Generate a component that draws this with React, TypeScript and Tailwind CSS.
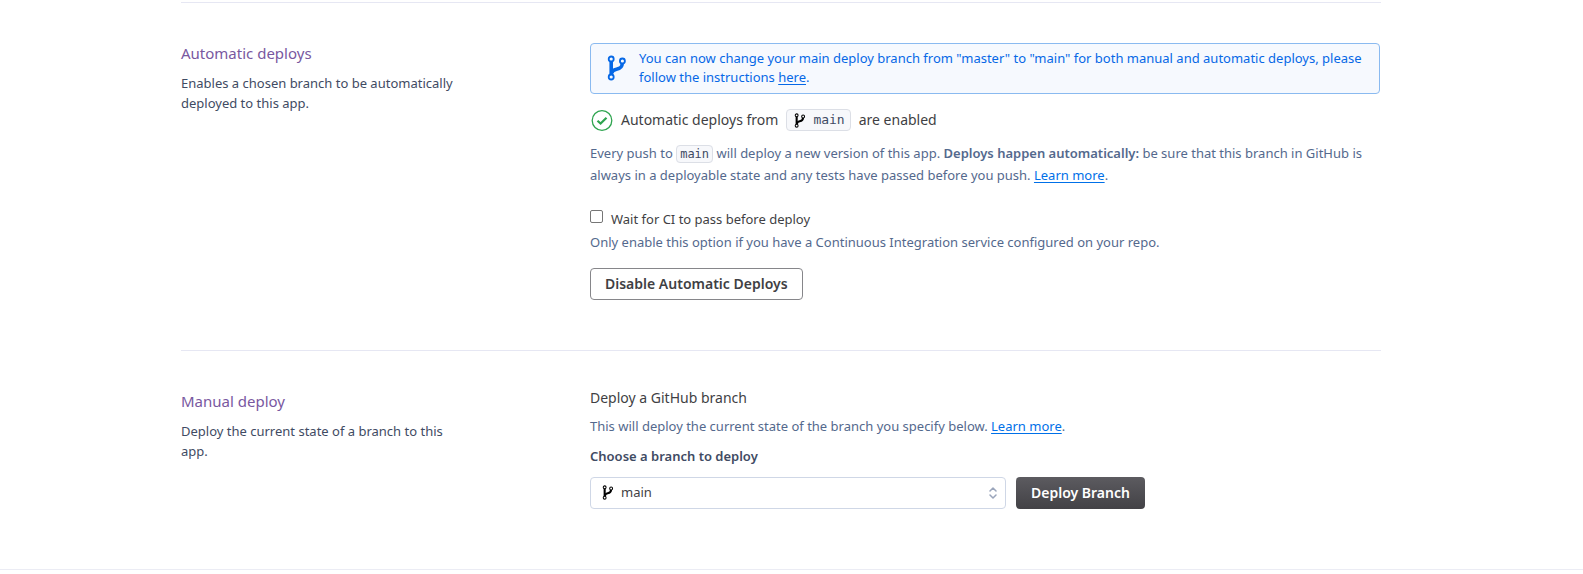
import type { ReactNode } from "react";

function ForkIcon({ className }: { className: string }) {
  return (
    <svg viewBox="0 0 20 26" fill="none" stroke="currentColor" className={className} aria-hidden="true">
      <circle cx="4.2" cy="4" r="2.5" strokeWidth="1.8" />
      <circle cx="15.4" cy="6" r="2.5" strokeWidth="1.8" />
      <circle cx="4.2" cy="22" r="2.5" strokeWidth="1.8" />
      <path d="M4.2 6.5V19.5" strokeWidth="3.6" />
      <path d="M15.2 8.5C15.2 12.8 12.6 13.6 9.5 14.2C6.6 14.8 5 16 4.6 18.6" strokeWidth="3.6" />
    </svg>
  );
}

function CheckIcon() {
  return (
    <svg viewBox="0 0 22 22" fill="none" stroke="#2ea44f" className="size-[22px] shrink-0" aria-hidden="true">
      <circle cx="11" cy="11.5" r="9.8" strokeWidth="1.3" />
      <path d="M6.5 11.8L9.6 14.6L15.5 8.8" strokeWidth="2.2" />
    </svg>
  );
}

function SortIcon() {
  return (
    <svg viewBox="0 0 8 12" fill="none" stroke="#9aa5bb" strokeWidth="1.5" strokeLinecap="round" strokeLinejoin="round" className="pointer-events-none absolute right-[9px] top-[10px] h-3 w-2" aria-hidden="true">
      <path d="M1 4L4 1L7 4" />
      <path d="M1 8L4 11L7 8" />
    </svg>
  );
}

function TextLink({ children }: { children: ReactNode }) {
  return (
    <a href="#" className="text-[#0070e8] underline underline-offset-2">
      {children}
    </a>
  );
}

function Section({ title, description, children }: { title: string; description: string; children: ReactNode }) {
  return (
    <section className="flex gap-[133px] border-t border-[#e6e7f3] pt-10">
      <div className="w-[276px] shrink-0">
        <h2 className="text-[15px] leading-5 text-[#79589f]">{title}</h2>
        <p className="mt-[10px] text-[13px] leading-5 text-[#3f4b63]">{description}</p>
      </div>
      <div className="min-w-0 flex-1 pr-px">{children}</div>
    </section>
  );
}

export default function App() {
  return (
    <div className="border-b border-[#ebecf4] bg-white pb-[60px] pr-[21px] pt-[2px] font-['Noto_Sans','Open_Sans',sans-serif]">
      <main className="mx-auto flex max-w-[1200px] flex-col gap-[50px]">
        <Section title="Automatic deploys" description="Enables a chosen branch to be automatically deployed to this app.">
          <div className="flex items-center gap-3 rounded border border-[#8abaf0] bg-[#f6f9fe] pb-[6px] pl-4 pr-3 pt-[5px] text-[#0668e6]">
            <ForkIcon className="h-[26px] w-5 shrink-0" />
            <p className="text-[13px] leading-[19px]">
              You can now change your main deploy branch from "master" to "main" for both manual and automatic deploys, please follow the instructions{" "}
              <a href="#" className="underline underline-offset-2">here</a>.
            </p>
          </div>
          <div className="mt-[15px] flex h-[22px] items-center gap-2 pl-px text-sm text-[#3f3f44]">
            <CheckIcon />
            <span>Automatic deploys from</span>
            <span className="flex h-[22px] items-center gap-[7px] rounded border border-[#dcdfe6] bg-[#f7f8fb] pl-[7px] pr-[5px] font-['DejaVu_Sans_Mono',monospace] text-[13px] text-[#3f4b63]">
              <ForkIcon className="h-[15px] w-3 text-black" />
              main
            </span>
            <span>are enabled</span>
          </div>
          <p className="mt-[11px] text-[13px] leading-[22px] text-[#54698d]">
            Every push to{" "}
            <code className="rounded border border-[#dcdfe6] bg-[#f7f8fb] px-[3px] py-px font-['DejaVu_Sans_Mono',monospace] text-[12px] leading-none text-[#3f4b63]">main</code>{" "}
            will deploy a new version of this app. <strong className="font-semibold">Deploys happen automatically:</strong> be sure that this branch in GitHub is always in a deployable state and any tests have passed before you push. <TextLink>Learn more</TextLink>.
          </p>
          <div className="mt-6 flex gap-2">
            <input id="wait-ci" type="checkbox" className="size-[13px] appearance-none rounded-[2px] border border-[#767676] bg-white" />
            <label htmlFor="wait-ci" className="text-[13px] leading-[18px] text-[#3f3f44]">Wait for CI to pass before deploy</label>
          </div>
          <p className="mt-1 text-[13px] leading-5 text-[#54698d]">Only enable this option if you have a Continuous Integration service configured on your repo.</p>
          <button type="button" className="mt-4 block h-8 rounded border border-[#86868a] bg-white px-[14px] pb-px text-sm font-semibold text-[#3f3f44]">
            Disable Automatic Deploys
          </button>
        </Section>
        <Section title="Manual deploy" description="Deploy the current state of a branch to this app.">
          <h3 className="text-sm leading-[14px] text-[#3f3f44]">Deploy a GitHub branch</h3>
          <p className="mt-[11px] text-[13px] leading-5 text-[#54698d]">
            This will deploy the current state of the branch you specify below. <TextLink>Learn more</TextLink>.
          </p>
          <label htmlFor="branch" className="mt-[10px] block text-[13px] font-semibold leading-5 text-[#3f4b63]">Choose a branch to deploy</label>
          <div className="mt-[11px] flex gap-[10px]">
            <div className="relative w-[416px]">
              <select id="branch" className="block h-8 w-full appearance-none rounded border border-[#cfd7e6] bg-white pl-[30px] text-[13px] text-[#3f3f44]">
                <option>main</option>
              </select>
              <ForkIcon className="pointer-events-none absolute left-3 top-2 h-[15px] w-3 text-black" />
              <SortIcon />
            </div>
            <button type="button" className="h-8 rounded bg-linear-to-b from-[#5c5b60] to-[#434246] px-[15px] pb-px text-sm font-semibold text-white">Deploy Branch</button>
          </div>
        </Section>
      </main>
    </div>
  );
}
